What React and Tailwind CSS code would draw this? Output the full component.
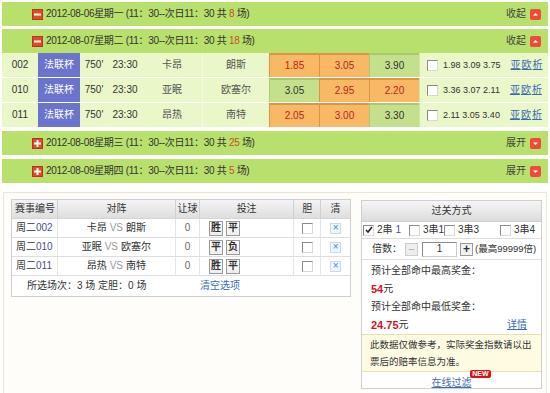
import React from 'react'

const matches = [
  { no: '002', home: '卡昂', away: '朗斯', odds: [['1.85', true], ['3.05', true], ['3.90', false]], avg: '1.98 3.09 3.75', bets: ['胜', '平'] },
  { no: '010', home: '亚眠', away: '欧塞尔', odds: [['3.05', false], ['2.95', true], ['2.20', true]], avg: '3.36 3.07 2.11', bets: ['平', '负'] },
  { no: '011', home: '昂热', away: '南特', odds: [['2.05', true], ['3.00', true], ['3.30', false]], avg: '2.11 3.05 3.40', bets: ['胜', '平'] },
]

const LeftIcon = ({ open }) => (
  <svg width="11" height="11" viewBox="0 0 11 11" className="shrink-0">
    <rect x="0.5" y="0.5" width="10" height="10" fill="#e4472c" stroke="#b9341c" />
    {open ? (
      <rect x="2" y="4.5" width="7" height="2" fill="#fff" />
    ) : (
      <path d="M4.5 2h2v2.5H9v2H6.5V9h-2V6.5H2v-2h2.5z" fill="#fff" />
    )}
  </svg>
)

const RightIcon = ({ open }) => (
  <svg width="11" height="11" viewBox="0 0 11 11" className="ml-[4px] shrink-0">
    <rect x="0" y="0" width="11" height="11" rx="2" fill="#ef4a3a" />
    {open ? (
      <path d="M3 6.5h5L5.5 4z" fill="#fff" />
    ) : (
      <path d="M3 4.5h5L5.5 7z" fill="#fff" />
    )}
  </svg>
)

const DayBar = ({ date, count, open }) => (
  <div className="flex h-[24px] items-center whitespace-nowrap bg-[#b8e06c] pl-[30px] pr-[7px] text-[10px] text-[#333]">
    <LeftIcon open={open} />
    <span className="ml-[3px] tracking-[-0.3px]">
      {date} (11：30--次日11：30 共 <span className="text-[#c8501e]">{count}</span> 场)
    </span>
    <span className="ml-auto text-[#444]">{open ? '收起' : '展开'}</span>
    <RightIcon open={open} />
  </div>
)

const Box = ({ checked = false }) => (
  <span className="inline-flex h-[11px] w-[11px] shrink-0 items-center justify-center border border-[#8a8a8a] border-r-[#d8d8d8] border-b-[#d8d8d8] bg-white">
    {checked && (
      <svg width="8" height="8" viewBox="0 0 8 8">
        <path d="M1 4l2 2 4-5" fill="none" stroke="#222" strokeWidth="1.6" />
      </svg>
    )}
  </span>
)

const MatchRow = ({ m }) => (
  <div className="flex h-[25px] whitespace-nowrap border-b border-white text-[10px] text-[#333]">
    <div className="flex w-[36px] items-center justify-center">{m.no}</div>
    <div className="flex w-[42px] items-center justify-center bg-[#6a74cc] text-white">法联杯</div>
    <div className="flex w-[28px] items-center justify-center">750'</div>
    <div className="flex w-[34px] items-center justify-center">23:30</div>
    <div className="flex w-[60px] items-center justify-center text-[#555]">{m.home}</div>
    <div className="flex w-[67px] items-center justify-center border-l border-[#f4fbe4] text-[#555]">{m.away}</div>
    {m.odds.map(([v, hot], i) => (
      <div
        key={i}
        className={
          hot
            ? 'flex w-[50px] items-center justify-center border-t-2 border-l border-[#d9954a] bg-[#f8b866] text-[#b3261c]'
            : 'flex w-[50px] items-center justify-center border-t-2 border-l border-[#a9c870] bg-[#c4e08c] text-[#333]'
        }
      >
        {v}
      </div>
    ))}
    <div className="flex flex-1 items-center border-l border-[#cfe6a0] pl-[7px]">
      <Box />
      <span className="ml-[5px] text-[9px]">{m.avg}</span>
      <span className="ml-[10px] flex gap-[1px] text-[#3a6cb4]">
        <span className="underline">亚</span>
        <span className="underline">欧</span>
        <span className="underline">析</span>
      </span>
    </div>
  </div>
)

const BetRow = ({ m }) => (
  <div className="flex h-[19px] whitespace-nowrap border-b border-[#ddd] text-[10px] text-[#333]">
    <div className="flex w-[45px] items-center pl-[4px]">
      周二<span className="text-[#4a4f8a]">{m.no}</span>
    </div>
    <div className="flex w-[119px] items-center justify-center border-l border-[#e4e4e4]">
      {m.home}<span className="mx-[3px] text-[#9a9a9a]">VS</span>{m.away}
    </div>
    <div className="flex w-[24px] items-center justify-center border-l border-[#e4e4e4] text-[#666]">0</div>
    <div className="flex w-[95px] items-center gap-[3px] border-l border-[#e4e4e4] pl-[9px]">
      {m.bets.map((b) => (
        <span key={b} className="flex h-[15px] w-[14px] items-center justify-center border border-[#999] bg-gradient-to-b from-white to-[#eee] text-[10px] font-bold leading-none">
          {b}
        </span>
      ))}
    </div>
    <div className="flex w-[27px] items-center justify-center border-l border-[#e4e4e4]">
      <Box />
    </div>
    <div className="flex w-[30px] items-center justify-center border-l border-[#e4e4e4]">
      <span className="flex h-[11px] w-[11px] items-center justify-center border border-[#c6dcec] bg-[#eef6fc] text-[10px] leading-none text-[#3a8ad0]">×</span>
    </div>
  </div>
)

export default function App() {
  return (
    <div className="h-[393px] w-[550px] overflow-hidden bg-white font-['Liberation_Sans','Noto_Sans_CJK_SC',sans-serif] leading-[14px]">
      <div className="px-[2px] pt-[2px]">
        <DayBar date="2012-08-06星期一" count="8" open />
        <div className="mt-[3px]">
          <DayBar date="2012-08-07星期二" count="18" open />
          <div className="bg-[#eaf7c8]">
            {matches.map((m) => (
              <MatchRow key={m.no} m={m} />
            ))}
          </div>
        </div>
        <div className="mt-[3px]">
          <DayBar date="2012-08-08星期三" count="25" />
        </div>
        <div className="mt-[4px]">
          <DayBar date="2012-08-09星期四" count="5" />
        </div>
      </div>

      {/* 投注区 */}
      <div className="mx-[3px] mt-[9px] flex h-[210px] gap-[10px] border border-[#ebe7d2] bg-[#fefdf9] pl-[7px] pt-[6px]">
        <div className="h-fit w-[340px] border border-[#cfcfcf] bg-white">
          <div className="flex h-[19px] whitespace-nowrap border-b border-[#d4d4d4] bg-gradient-to-b from-[#f4f4f4] to-[#dedede] text-[10px] text-[#333]">
            <div className="flex w-[45px] items-center pl-[3px]">赛事编号</div>
            <div className="flex w-[119px] items-center justify-center border-l border-[#d0d0d0]">对阵</div>
            <div className="flex w-[24px] items-center justify-center border-l border-[#d0d0d0]">让球</div>
            <div className="flex w-[95px] items-center justify-center border-l border-[#d0d0d0]">投注</div>
            <div className="flex w-[27px] items-center justify-center border-l border-[#d0d0d0]">胆</div>
            <div className="flex w-[30px] items-center justify-center border-l border-[#d0d0d0]">清</div>
          </div>
          {matches.map((m) => (
            <BetRow key={m.no} m={m} />
          ))}
          <div className="flex h-[20px] items-center whitespace-nowrap text-[10px] text-[#333]">
            <span className="w-[188px] pl-[15px]">所选场次：3 场 定胆：0 场</span>
            <span className="text-[#3a6cb4]">清空选项</span>
          </div>
        </div>

        <div className="mt-[1px] h-[189px] w-[181px] overflow-hidden whitespace-nowrap border border-[#cfcfcf] bg-white text-[10px] text-[#333]">
          <div className="flex h-[21px] items-center justify-center border-b border-[#d0d0d0] bg-gradient-to-b from-[#f6f6f6] to-[#dcdcdc]">过关方式</div>
          <div className="flex h-[17px] items-center border-b border-[#ddd] pl-[1px]">
            <span className="flex w-[46px] items-center gap-[3px]"><Box checked />2串<span className="text-[#4a4f8a]">1</span></span>
            <span className="flex w-[35px] items-center gap-[3px]"><Box />3串1</span>
            <span className="flex w-[56px] items-center gap-[3px]"><Box />3串3</span>
            <span className="flex items-center gap-[3px]"><Box />3串4</span>
          </div>
          <div className="flex h-[21px] items-center border-b border-[#ddd] pl-[10px]">
            <span>倍数：</span>
            <span className="ml-[3px] flex h-[13px] w-[13px] items-center justify-center border border-[#ccc] bg-[#eee] text-[11px] leading-none text-[#aaa]">−</span>
            <span className="ml-[4px] flex h-[15px] w-[35px] items-center justify-center border border-[#888] border-r-[#ccc] border-b-[#ccc]">1</span>
            <span className="ml-[3px] flex h-[13px] w-[13px] items-center justify-center border border-[#999] bg-[#f2f2f2] text-[12px] font-bold leading-none text-[#333]">+</span>
            <span className="ml-[2px] text-[9.5px]">(最高99999倍)</span>
          </div>
          <div className="pl-[9px] pt-[2px]">
            <div className="flex h-[18px] items-center">预计全部命中最高奖金：</div>
            <div className="flex h-[18px] items-center">
              <span className="text-[11px] font-bold text-[#d0141c]">54</span>元
            </div>
            <div className="flex h-[18px] items-center">预计全部命中最低奖金：</div>
            <div className="flex h-[18px] items-center pr-[14px]">
              <span className="text-[11px] font-bold text-[#d0141c]">24.75</span>元
              <span className="ml-auto text-[#3a6cb4] underline">详情</span>
            </div>
          </div>
          <div className="border-y border-[#e6dfb0] bg-[#fdfbe2] px-[8px] py-[1px] text-[9.5px] leading-[17px]">
            此数据仅做参考，实际奖金指数请以出
            <br />
            票后的赔率信息为准。
          </div>
          <div className="flex h-[19px] items-center justify-center pt-[3px]">
            <span className="relative text-[#3a6cb4] underline">
              在线过滤
              <span className="absolute -right-[19px] -top-[6px] rounded-[2px] bg-[#d8121a] px-[2px] text-[7px] font-bold leading-[8px] text-white no-underline">NEW</span>
            </span>
          </div>
        </div>
      </div>
    </div>
  )
}
